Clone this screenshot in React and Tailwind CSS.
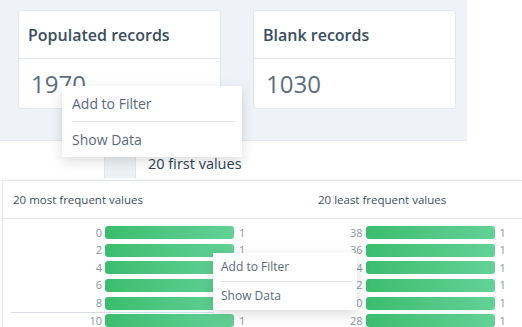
import React from 'react';

const font = { fontFamily: '"Open Sans", "Noto Sans", sans-serif' };

const leftRows = [['0', '1'], ['2', '1'], ['4', '1'], ['6', '1'], ['8', '1'], ['10', '1']];
const rightRows = [['38', '1'], ['36', '1'], ['34', '1'], ['32', '1'], ['30', '1'], ['28', '1']];

const StatCard = ({ title, value }) => (
    <div className="w-[203px] h-[99px] bg-white rounded-[3px] border border-[#e3e8ee] flex flex-col">
        <div className="h-[48px] flex items-center px-[9px] border-b border-[#e3e8ee]">
            <span className="text-[16px] font-semibold text-[#3a4d60]">{title}</span>
        </div>
        <div className="flex-1 flex items-center px-[12px]">
            <span className="text-[24px] text-[#5d6d7e]">{value}</span>
        </div>
    </div>
);

const BarColumn = ({ rows, divider }) => (
    <div className="w-[261px] flex flex-col pt-[5px]">
        {rows.map(([label, count], i) => (
            <div key={i} className={`flex items-center h-[17.6px] ${divider && i === 4 ? 'relative' : ''}`}>
                <span className="w-[104px] pr-[3px] text-right text-[11px] text-[#8a96a3]">{label}</span>
                <div className="w-[129px] h-[13px] rounded-[3px] bg-gradient-to-r from-[#3bbd6e] to-[#63d197]" />
                <span className="pl-[5px] text-[11px] text-[#8a96a3]">{count}</span>
                {divider && i === 4 && (
                    <div className="absolute left-[10px] right-[48px] bottom-[-1px] h-px bg-[#d9dee4]" />
                )}
            </div>
        ))}
    </div>
);

const Menu = ({ className, textSize, itemH }) => (
    <div className={`absolute bg-white shadow-[0_4px_12px_rgba(0,0,0,0.14)] ${className}`}>
        <div className={`flex items-center ${itemH} ${textSize} text-[#5b6a7b]`}>Add to Filter</div>
        <div className="h-px bg-[#e3e7ec] -mr-[3px]" />
        <div className={`flex items-center ${itemH} ${textSize} text-[#5b6a7b]`}>Show Data</div>
    </div>
);

export default function App() {
    return (
        <div className="relative w-[522px] h-[327px] bg-white overflow-hidden" style={font}>
            {/* Stat cards */}
            <div className="w-[467px] h-[141px] bg-[#eff2f6] border-b border-[#e3e8ee] flex gap-[32px] pl-[18px] pt-[10px]">
                <StatCard title="Populated records" value="1970" />
                <StatCard title="Blank records" value="1030" />
            </div>

            {/* Tab row */}
            <div className="h-[39px] flex">
                <div className="ml-[104px] w-[32px] h-[37px] bg-[#eef1f4] border-x border-[#e2e6eb]" />
                <div className="ml-[12px] pt-[16px] text-[14.5px] text-[#2f4256] leading-none">20 first values</div>
            </div>

            {/* Frequency panel */}
            <div className="ml-[2px] border-t border-l border-[#e4e8ed] shadow-[0_-1px_3px_rgba(0,0,0,0.04)]">
                <div className="h-[38px] flex items-center border-b border-[#e4e8ed]">
                    <span className="pl-[10px] w-[315px] text-[11.5px] text-[#3d4f62]">20 most frequent values</span>
                    <span className="text-[11.5px] text-[#3d4f62]">20 least frequent values</span>
                </div>
                <div className="flex -ml-[2px]">
                    <BarColumn rows={leftRows} divider />
                    <BarColumn rows={rightRows} />
                </div>
            </div>

            {/* Context menus */}
            <Menu
                className="left-[62px] top-[86px] w-[180px] px-[10px]"
                textSize="text-[14px]"
                itemH="h-[35px]"
            />
            <Menu
                className="left-[213px] top-[253px] w-[144px] px-[8px]"
                textSize="text-[12px]"
                itemH="h-[28px]"
            />
        </div>
    );
}
